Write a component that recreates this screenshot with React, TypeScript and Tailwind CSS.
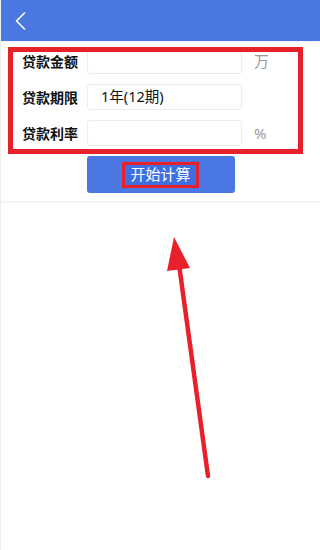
const rows = [
  { label: "贷款金额", value: "", unit: "万" },
  { label: "贷款期限", value: "1年(12期)", unit: "" },
  { label: "贷款利率", value: "", unit: "%" },
];

export default function App() {
  return (
    <div
      className="relative h-[550px] w-[320px] overflow-hidden border-l border-[#eeeeee] bg-white"
      style={{ fontFamily: '"Noto Sans", "Noto Sans CJK SC", sans-serif' }}
    >
      <header className="flex h-[41px] items-center bg-[#4a78e0] pl-[14px] shadow-[0_1px_2px_rgba(0,0,0,0.08)]">
        <svg width="11" height="18" viewBox="0 0 11 18" fill="none">
          <polyline
            points="9.5,1 1.5,9 9.5,17"
            stroke="white"
            strokeWidth="1.6"
            strokeLinecap="round"
            strokeLinejoin="round"
          />
        </svg>
      </header>

      <div className="mt-[2px] flex flex-col">
        {rows.map((r) => (
          <div key={r.label} className="flex h-[36px] items-center">
            <span className="w-[86px] shrink-0 pl-[21px] text-[14px] font-bold text-[#111] whitespace-nowrap">
              {r.label}
            </span>
            <div className="flex h-[26px] w-[155px] shrink-0 items-center rounded-[3px] border border-[#ececec] pl-[13px] text-[14.5px] text-[#111]">
              {r.value}
            </div>
            <span className="pl-[12px] text-[15px] text-[#9a9a9a]">{r.unit}</span>
          </div>
        ))}
      </div>

      <button className="mx-auto mt-[5px] flex h-[37px] w-[148px] items-center justify-center rounded-[3px] bg-[#4a77e2]">
        <span className="flex h-[26px] w-[77px] items-center justify-center border-[3px] border-[#e8202a] bg-[#3d6fe3] text-[15px] leading-none text-white">
          开始计算
        </span>
      </button>

      <div className="mt-[8px] h-[2px] bg-[#f3f3f3]" />

      {/* annotation box */}
      <div className="absolute left-[7px] top-[47px] h-[107px] w-[295px] border-[5px] border-[#e8202a]" />

      {/* annotation arrow */}
      <svg className="absolute left-0 top-0" width="320" height="550" viewBox="0 0 320 550">
        <line x1="178.5" y1="268" x2="207" y2="476" stroke="#e8202a" strokeWidth="4.5" strokeLinecap="round" />
        <polygon points="173,237 166,271 189,268" fill="#e8202a" />
      </svg>
    </div>
  );
}
